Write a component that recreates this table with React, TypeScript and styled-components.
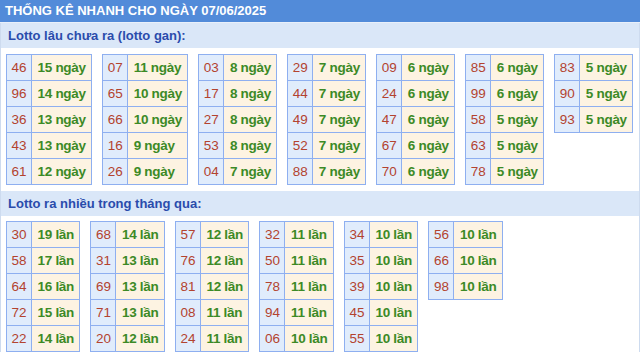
import React from "react";
import styled, { createGlobalStyle } from "styled-components";

const Global = createGlobalStyle`
  html, body { margin: 0; padding: 0; background: #fff; }
  body { font-family: "Liberation Sans", Arial, sans-serif; }
`;

const Wrap = styled.div`
  width: 640px;
  box-sizing: border-box;
  border-left: 1px solid #cddbef;
  border-right: 1px solid #cddbef;
  background: #fff;
`;

const Header = styled.div`
  height: 22px;
  margin: 0 -1px;
  background: #528bd9;
  color: #fff;
  font-weight: bold;
  font-size: 13px;
  line-height: 22px;
  padding-left: 5px;
  border-bottom: 1px solid #e9f0fa;
`;

const Band = styled.div`
  height: 25px;
  background: #dae7f8;
  color: #2a4cac;
  font-weight: bold;
  font-size: 13px;
  line-height: 25px;
  padding-left: 7px;
`;

const Grid = styled.div<{ $top: number; $bottom: number }>`
  display: flex;
  flex-wrap: wrap;
  align-items: flex-start;
  gap: 10px;
  padding: ${(p) => p.$top}px 0 ${(p) => p.$bottom}px 5px;
`;

const Table = styled.table`
  border-collapse: collapse;
  font-size: 13px;
`;

const Cell = styled.td`
  border: 1px solid #8eaff0;
  height: 26px;
  box-sizing: border-box;
  padding: 0;
  text-align: center;
  line-height: 15px;
`;

const Num = styled(Cell)`
  background: #e0ecfc;
  color: #b3432f;
  width: 25px;
  font-size: 13.5px;
`;

const Val = styled(Cell)`
  background: #fdf3e2;
  color: #3c8a26;
  font-weight: bold;
  padding: 0 5.5px;
  font-size: 13.5px;
  letter-spacing: -0.3px;
  white-space: nowrap;
  text-align: left;
`;

type Col = [string, string][];

const gan: Col[] = [
  [["46", "15"], ["96", "14"], ["36", "13"], ["43", "13"], ["61", "12"]],
  [["07", "11"], ["65", "10"], ["66", "10"], ["16", "9"], ["26", "9"]],
  [["03", "8"], ["17", "8"], ["27", "8"], ["53", "8"], ["04", "7"]],
  [["29", "7"], ["44", "7"], ["49", "7"], ["52", "7"], ["88", "7"]],
  [["09", "6"], ["24", "6"], ["47", "6"], ["67", "6"], ["70", "6"]],
  [["85", "6"], ["99", "6"], ["58", "5"], ["63", "5"], ["78", "5"]],
  [["83", "5"], ["90", "5"], ["93", "5"]],
];

const nhieu: Col[] = [
  [["30", "19"], ["58", "17"], ["64", "16"], ["72", "15"], ["22", "14"]],
  [["68", "14"], ["31", "13"], ["69", "13"], ["71", "13"], ["20", "12"]],
  [["57", "12"], ["76", "12"], ["81", "12"], ["08", "11"], ["24", "11"]],
  [["32", "11"], ["50", "11"], ["78", "11"], ["94", "11"], ["06", "10"]],
  [["34", "10"], ["35", "10"], ["39", "10"], ["45", "10"], ["55", "10"]],
  [["56", "10"], ["66", "10"], ["98", "10"]],
];

function Block({ cols, unit }: { cols: Col[]; unit: string }) {
  return (
    <>
      {cols.map((col, i) => (
        <Table key={i}>
          <tbody>
            {col.map(([n, v]) => (
              <tr key={n}>
                <Num>{n}</Num>
                <Val>
                  {v} {unit}
                </Val>
              </tr>
            ))}
          </tbody>
        </Table>
      ))}
    </>
  );
}

export default function App() {
  return (
    <>
      <Global />
      <Wrap>
        <Header>THỐNG KÊ NHANH CHO NGÀY 07/06/2025</Header>
        <Band>Lotto lâu chưa ra (lotto gan):</Band>
        <Grid $top={6} $bottom={6}>
          <Block cols={gan} unit="ngày" />
        </Grid>
        <Band>Lotto ra nhiều trong tháng qua:</Band>
        <Grid $top={5} $bottom={6}>
          <Block cols={nhieu} unit="lần" />
        </Grid>
      </Wrap>
    </>
  );
}
